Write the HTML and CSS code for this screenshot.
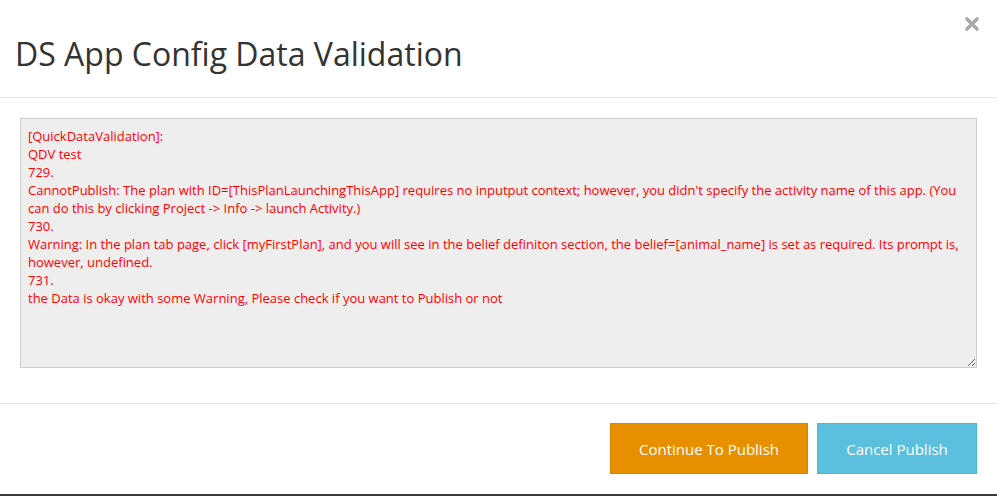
FILE: index.html
```html
<!DOCTYPE html>
<html>
<head>
    <meta charset="utf-8" />
    <title>DS App Config Data Validation</title>
    <link rel="stylesheet" href="styles.css">
</head>
<body>
    <div class="modal">
        <div class="modal-header">
            <button type="button" class="close" title="Close">
                <svg width="16" height="16" viewBox="0 0 16 16">
                    <path d="M3 3L13 13M13 3L3 13" stroke="#a9a9a9" stroke-width="3.6" stroke-linecap="round" />
                </svg>
            </button>
            <h4 class="modal-title">DS App Config Data Validation</h4>
        </div>
        <div class="modal-body">
            <textarea class="result" readonly>[QuickDataValidation]:
QDV test
729.
CannotPublish: The plan with ID=[ThisPlanLaunchingThisApp] requires no inputput context; however, you didn't specify the activity name of this app. (You can do this by clicking Project -&gt; Info -&gt; launch Activity.)
730.
Warning: In the plan tab page, click [myFirstPlan], and you will see in the belief definiton section, the belief=[animal_name] is set as required. Its prompt is, however, undefined.
731.
the Data is okay with some Warning, Please check if you want to Publish or not</textarea>
        </div>
        <div class="modal-footer">
            <button type="button" class="btn btn-warning">Continue To Publish</button>
            <button type="button" class="btn btn-info">Cancel Publish</button>
        </div>
    </div>
    <div class="page-behind"></div>
</body>
</html>
```

FILE: styles.css
```css
html, body {
    margin: 0;
    padding: 0;
    background-color: #fff;
}

body {
    font-family: "Open Sans", "Noto Sans", Arial, sans-serif;
    color: #333;
    overflow: hidden;
}

.modal {
    width: 997px;
    height: 494px;
    background-color: #fff;
    display: flex;
    flex-direction: column;
}

.modal-header {
    height: 97px;
    border-bottom: 1px solid #e5e5e5;
    position: relative;
    display: flex;
    align-items: center;
    padding: 0 15px;
    box-sizing: content-box;
}

.modal-title {
    margin: 0;
    font-size: 32px;
    font-weight: normal;
    color: #333;
    padding-top: 10px;
}

.close {
    position: absolute;
    top: 16px;
    right: 17px;
    border: 0;
    background: none;
    padding: 0;
    cursor: pointer;
    line-height: 0;
}

.modal-body {
    padding: 20px 20px 35px;
}

.result {
    display: block;
    width: 957px;
    height: 250px;
    box-sizing: border-box;
    margin: 0;
    padding: 8px 7px;
    border: 1px solid #ccc;
    background-color: #eee;
    color: #f00;
    font-family: "Open Sans", "Noto Sans", Arial, sans-serif;
    font-size: 13px;
    line-height: 18px;
    resize: vertical;
    outline: none;
}

.modal-footer {
    border-top: 1px solid #e5e5e5;
    padding: 19px 20px 20px;
    display: flex;
    justify-content: flex-end;
    gap: 9px;
}

.btn {
    height: 51px;
    padding: 0;
    border: 1px solid transparent;
    font-family: "Open Sans", "Noto Sans", Arial, sans-serif;
    font-size: 15px;
    white-space: nowrap;
    text-align: center;
    color: #fff;
    cursor: pointer;
}

.btn-warning {
    width: 198px;
    background-color: #e88f00;
    border-color: #d88400;
}

.btn-info {
    width: 160px;
    background-color: #5bc0de;
    border-color: #46b8da;
}

.page-behind {
    height: 2px;
    background-color: #3a3a3a;
}
```
